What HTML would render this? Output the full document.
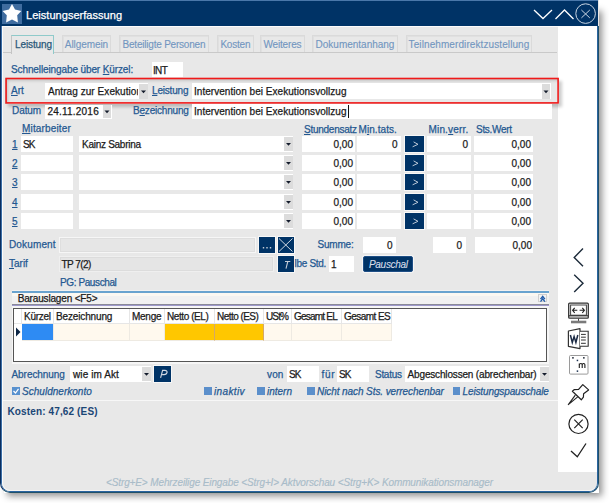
<!DOCTYPE html>
<html><head><meta charset="utf-8"><style>
html,body{margin:0;padding:0;background:#fff;}
body{width:609px;height:503px;position:relative;overflow:hidden;font-family:"Liberation Sans",sans-serif;}
.t{position:absolute;white-space:nowrap;line-height:12px;-webkit-text-stroke:0.25px currentColor;}
u{text-decoration:underline;text-underline-offset:1px;}
svg{overflow:visible}
</style></head><body>
<div style="position:absolute;left:4px;top:8px;width:595px;height:485px;box-shadow:3px 3px 7px rgba(0,0,0,0.44);"></div>
<div style="position:absolute;left:0px;top:0px;width:599px;height:493px;background:#e8e8e8;border-radius:0 0 10px 10px;"></div>
<div style="position:absolute;left:0px;top:0px;width:598px;height:26px;background:#003366;"></div>
<div style="position:absolute;left:0px;top:0px;width:598px;height:1px;background:#4a78aa;"></div>
<div style="position:absolute;left:2px;top:4px;width:20px;height:20px;background:#3f6c9f;"></div>
<svg style="position:absolute;left:2px;top:3px" width="21" height="21" viewBox="2 3 21 21"><polygon fill="#fff" points="12,3.9 15,9.6 21.3,10.9 17.2,15.3 17.9,22.5 12,19.5 6.1,22.5 6.8,15.3 2.6,10.9 9,9.6"/></svg>
<div class="t" style="left:26px;top:9px;font-size:11px;color:#fff;letter-spacing:0.036px;">Leistungserfassung</div>
<svg style="position:absolute;left:530px;top:5px" width="50" height="20" viewBox="530 5 50 20"><polyline points="534,10 543,18.5 552,10" fill="none" stroke="#fff" stroke-width="1.3"/><polyline points="555.5,19 564.5,10 573.5,19" fill="none" stroke="#fff" stroke-width="1.3"/></svg>
<svg style="position:absolute;left:574px;top:2px" width="24" height="24" viewBox="574 2 24 24"><circle cx="585.6" cy="13.6" r="9.8" fill="none" stroke="#c9d5e2" stroke-width="1"/><path d="M581.4,10 L589.8,17.9 M589.8,10 L581.4,17.9" stroke="#c9d5e2" stroke-width="1"/></svg>
<div style="position:absolute;left:2px;top:26px;width:595px;height:1px;background:#fbfbfb;"></div>
<div style="position:absolute;left:558px;top:26px;width:39px;height:446px;background:#fff;"></div>
<div style="position:absolute;left:0;top:26px;width:599px;height:467px;box-sizing:border-box;border-left:1px solid #0a2d5e;border-right:1px solid #1f5068;border-bottom:1px solid #1f5068;border-radius:0 0 10px 10px;"></div>
<div style="position:absolute;left:1px;top:26px;width:597px;height:466px;box-sizing:border-box;border-left:1px solid #3b6ea6;border-right:1px solid #2a64a0;border-bottom:1px solid #2a64a0;border-radius:0 0 9px 9px;"></div>
<div style="position:absolute;left:2px;top:26px;width:595px;height:465px;box-sizing:border-box;border-left:1px solid #fbfbfb;border-bottom:1px solid #f8f6f2;border-radius:0 0 8px 8px;"></div>
<div style="position:absolute;left:3px;top:52px;width:554px;height:1px;background:#c9c9c9;"></div>
<div style="position:absolute;left:11px;top:35px;width:41px;height:18px;background:#e8e8e8;border-left:1px solid #c4c4c4;border-top:1px solid #8fcaca;border-right:1px solid #8fcaca;"></div>
<div class="t" style="left:15px;top:39px;font-size:10px;color:#2a5878;letter-spacing:-0.115px;">Leistung</div>
<div style="position:absolute;left:62px;top:35px;width:47px;height:16px;border:1px solid #dadada;border-bottom:none;box-shadow:inset 1px 1px 0 #e0e0e0;"></div>
<div class="t" style="left:64.8px;top:39px;font-size:10px;color:#7296c0;letter-spacing:-0.076px;-webkit-text-stroke:0.12px currentColor;">Allgemein</div>
<div style="position:absolute;left:119px;top:35px;width:88px;height:16px;border:1px solid #dadada;border-bottom:none;box-shadow:inset 1px 1px 0 #e0e0e0;"></div>
<div class="t" style="left:122.5px;top:39px;font-size:10px;color:#7296c0;letter-spacing:-0.207px;-webkit-text-stroke:0.12px currentColor;">Beteiligte Personen</div>
<div style="position:absolute;left:217px;top:35px;width:35px;height:16px;border:1px solid #dadada;border-bottom:none;box-shadow:inset 1px 1px 0 #e0e0e0;"></div>
<div class="t" style="left:220.4px;top:39px;font-size:10px;color:#7296c0;letter-spacing:-0.206px;-webkit-text-stroke:0.12px currentColor;">Kosten</div>
<div style="position:absolute;left:260px;top:35px;width:43px;height:16px;border:1px solid #dadada;border-bottom:none;box-shadow:inset 1px 1px 0 #e0e0e0;"></div>
<div class="t" style="left:263.4px;top:39px;font-size:10px;color:#7296c0;letter-spacing:-0.153px;-webkit-text-stroke:0.12px currentColor;">Weiteres</div>
<div style="position:absolute;left:312px;top:35px;width:84px;height:16px;border:1px solid #dadada;border-bottom:none;box-shadow:inset 1px 1px 0 #e0e0e0;"></div>
<div class="t" style="left:315.6px;top:39px;font-size:10px;color:#7296c0;letter-spacing:-0.011px;-webkit-text-stroke:0.12px currentColor;">Dokumentanhang</div>
<div style="position:absolute;left:406px;top:35px;width:124px;height:16px;border:1px solid #dadada;border-bottom:none;box-shadow:inset 1px 1px 0 #e0e0e0;"></div>
<div class="t" style="left:408.6px;top:39px;font-size:10px;color:#7296c0;letter-spacing:0.093px;-webkit-text-stroke:0.12px currentColor;">Teilnehmerdirektzustellung</div>
<div class="t" style="left:11px;top:64px;font-size:10px;color:#245891;letter-spacing:-0.111px;">Schnelleingabe über <u>K</u>ürzel:</div>
<div style="position:absolute;left:152px;top:62px;width:31px;height:15px;background:#fff;"></div>
<div class="t" style="left:153px;top:65px;font-size:10px;color:#1a1a1a;letter-spacing:-0.654px;">INT</div>
<div style="position:absolute;left:5px;top:78px;width:554px;height:26px;box-shadow:3px 3px 3px rgba(0,0,0,0.2), inset 3px 3px 3px rgba(0,0,0,0.15);"></div>
<div class="t" style="left:11px;top:85px;font-size:10px;color:#245891;"><u>A</u>rt</div>
<div style="position:absolute;left:45px;top:83px;width:103px;height:16px;background:#fff;"></div>
<div class="t" style="left:48px;top:86px;font-size:10px;color:#1a1a1a;width:90px;overflow:hidden;letter-spacing:0.062px;">Antrag zur Exekution</div>
<div style="position:absolute;left:139px;top:84px;width:9px;height:15px;background:#dcdcdc;"></div>
<svg style="position:absolute;left:139px;top:84px" width="9" height="15" viewBox="139 84 9 15"><polygon points="141.0,90.5 146.0,90.5 143.5,93.3" fill="#141c2c"/></svg>
<div class="t" style="left:152px;top:85px;font-size:10px;color:#245891;letter-spacing:-0.186px;"><u>L</u>eistung</div>
<div style="position:absolute;left:192px;top:83px;width:359px;height:16px;background:#fff;"></div>
<div class="t" style="left:194px;top:86px;font-size:10px;color:#1a1a1a;letter-spacing:0.040px;">Intervention bei Exekutionsvollzug</div>
<div style="position:absolute;left:542px;top:84px;width:8px;height:15px;background:#dcdcdc;"></div>
<svg style="position:absolute;left:542px;top:84px" width="8" height="15" viewBox="542 84 8 15"><polygon points="543.5,90.5 548.5,90.5 546.0,93.3" fill="#141c2c"/></svg>
<svg style="position:absolute;left:4px;top:77px" width="556" height="28" viewBox="4 77 556 28"><rect x="6.1" y="78.5" width="552" height="24.4" fill="none" stroke="#f01a1a" stroke-width="1.6"/></svg>
<div class="t" style="left:12px;top:105px;font-size:10px;color:#245891;letter-spacing:-0.063px;">Datum</div>
<div style="position:absolute;left:45px;top:105px;width:67px;height:14px;background:#fff;"></div>
<div class="t" style="left:47.5px;top:106px;font-size:10px;color:#1a1a1a;letter-spacing:0.211px;">24.11.2016</div>
<div style="position:absolute;left:103px;top:105px;width:8px;height:13px;background:#dcdcdc;"></div>
<svg style="position:absolute;left:103px;top:105px" width="8" height="13" viewBox="103 105 8 13"><polygon points="104.5,110.5 109.5,110.5 107.0,113.3" fill="#141c2c"/></svg>
<div class="t" style="left:133px;top:105px;font-size:10px;color:#245891;letter-spacing:-0.202px;">B<u>e</u>zeichnung</div>
<div style="position:absolute;left:192px;top:104px;width:360px;height:15px;background:#fff;"></div>
<div class="t" style="left:194px;top:106px;font-size:10px;color:#1a1a1a;letter-spacing:0.040px;">Intervention bei Exekutionsvollzug</div>
<div style="position:absolute;left:348px;top:105px;width:1px;height:13px;background:#111;"></div>
<div class="t" style="left:22px;top:123px;font-size:10px;color:#245891;letter-spacing:0.157px;"><u>M</u>itarbeiter</div>
<div class="t" style="left:304px;top:124px;font-size:10px;color:#245891;letter-spacing:-0.259px;"><u>S</u>tundensatz</div>
<div class="t" style="left:358.5px;top:124px;font-size:10px;color:#245891;letter-spacing:0.064px;">M<u>i</u>n.tats.</div>
<div class="t" style="left:428.5px;top:124px;font-size:10px;color:#245891;letter-spacing:0.170px;">Min.<u>v</u>err.</div>
<div class="t" style="left:476px;top:124px;font-size:10px;color:#245891;letter-spacing:-0.293px;">Sts.Wert</div>
<div class="t" style="left:12px;top:139px;font-size:10px;color:#245891;"><u>1</u></div>
<div style="position:absolute;left:21px;top:136px;width:52px;height:16px;background:#fff;"></div>
<div style="position:absolute;left:79px;top:136px;width:214px;height:16px;background:#fff;"></div>
<div style="position:absolute;left:284px;top:137px;width:9px;height:14px;background:#dcdcdc;"></div>
<svg style="position:absolute;left:284px;top:137px" width="9" height="14" viewBox="284 137 9 14"><polygon points="286.0,143.0 291.0,143.0 288.5,145.8" fill="#141c2c"/></svg>
<div style="position:absolute;left:302px;top:136px;width:53px;height:16px;background:#fff;"></div>
<div class="t" style="right:256px;top:139px;font-size:10px;color:#222;">0,00</div>
<div style="position:absolute;left:357px;top:136px;width:44px;height:16px;background:#fff;"></div>
<div style="position:absolute;left:405px;top:136px;width:19px;height:16px;background:#003366;box-shadow:0 0 0 1px #f7f7f7;"></div>
<svg style="position:absolute;left:405px;top:136px" width="19" height="16" viewBox="405 136 19 16"><polyline points="413.6,141.9 418,144.3 412.6,146.8" fill="none" stroke="#b9c6d6" stroke-width="1"/></svg>
<div style="position:absolute;left:427px;top:136px;width:44px;height:16px;background:#fff;"></div>
<div style="position:absolute;left:474px;top:136px;width:59px;height:16px;background:#fff;"></div>
<div class="t" style="right:78px;top:139px;font-size:10px;color:#222;">0,00</div>
<div class="t" style="left:23px;top:139px;font-size:10px;color:#1a1a1a;letter-spacing:-0.941px;">SK</div>
<div class="t" style="left:82px;top:139px;font-size:10px;color:#1a1a1a;letter-spacing:-0.271px;">Kainz Sabrina</div>
<div class="t" style="right:211.5px;top:139px;font-size:10px;color:#222;">0</div>
<div class="t" style="right:141px;top:139px;font-size:10px;color:#222;">0</div>
<div class="t" style="left:12px;top:158px;font-size:10px;color:#245891;"><u>2</u></div>
<div style="position:absolute;left:21px;top:155px;width:52px;height:16px;background:#fff;"></div>
<div style="position:absolute;left:79px;top:155px;width:214px;height:16px;background:#fff;"></div>
<div style="position:absolute;left:284px;top:156px;width:9px;height:14px;background:#dcdcdc;"></div>
<svg style="position:absolute;left:284px;top:156px" width="9" height="14" viewBox="284 156 9 14"><polygon points="286.0,162.0 291.0,162.0 288.5,164.8" fill="#141c2c"/></svg>
<div style="position:absolute;left:302px;top:155px;width:53px;height:16px;background:#fff;"></div>
<div class="t" style="right:256px;top:158px;font-size:10px;color:#222;">0,00</div>
<div style="position:absolute;left:357px;top:155px;width:44px;height:16px;background:#fff;"></div>
<div style="position:absolute;left:405px;top:155px;width:19px;height:16px;background:#003366;box-shadow:0 0 0 1px #f7f7f7;"></div>
<svg style="position:absolute;left:405px;top:155px" width="19" height="16" viewBox="405 155 19 16"><polyline points="413.6,160.9 418,163.3 412.6,165.8" fill="none" stroke="#b9c6d6" stroke-width="1"/></svg>
<div style="position:absolute;left:427px;top:155px;width:44px;height:16px;background:#fff;"></div>
<div style="position:absolute;left:474px;top:155px;width:59px;height:16px;background:#fff;"></div>
<div class="t" style="right:78px;top:158px;font-size:10px;color:#222;">0,00</div>
<div class="t" style="left:12px;top:177px;font-size:10px;color:#245891;"><u>3</u></div>
<div style="position:absolute;left:21px;top:174px;width:52px;height:16px;background:#fff;"></div>
<div style="position:absolute;left:79px;top:174px;width:214px;height:16px;background:#fff;"></div>
<div style="position:absolute;left:284px;top:175px;width:9px;height:14px;background:#dcdcdc;"></div>
<svg style="position:absolute;left:284px;top:175px" width="9" height="14" viewBox="284 175 9 14"><polygon points="286.0,181.0 291.0,181.0 288.5,183.8" fill="#141c2c"/></svg>
<div style="position:absolute;left:302px;top:174px;width:53px;height:16px;background:#fff;"></div>
<div class="t" style="right:256px;top:177px;font-size:10px;color:#222;">0,00</div>
<div style="position:absolute;left:357px;top:174px;width:44px;height:16px;background:#fff;"></div>
<div style="position:absolute;left:405px;top:174px;width:19px;height:16px;background:#003366;box-shadow:0 0 0 1px #f7f7f7;"></div>
<svg style="position:absolute;left:405px;top:174px" width="19" height="16" viewBox="405 174 19 16"><polyline points="413.6,179.9 418,182.3 412.6,184.8" fill="none" stroke="#b9c6d6" stroke-width="1"/></svg>
<div style="position:absolute;left:427px;top:174px;width:44px;height:16px;background:#fff;"></div>
<div style="position:absolute;left:474px;top:174px;width:59px;height:16px;background:#fff;"></div>
<div class="t" style="right:78px;top:177px;font-size:10px;color:#222;">0,00</div>
<div class="t" style="left:12px;top:197px;font-size:10px;color:#245891;"><u>4</u></div>
<div style="position:absolute;left:21px;top:194px;width:52px;height:16px;background:#fff;"></div>
<div style="position:absolute;left:79px;top:194px;width:214px;height:16px;background:#fff;"></div>
<div style="position:absolute;left:284px;top:195px;width:9px;height:14px;background:#dcdcdc;"></div>
<svg style="position:absolute;left:284px;top:195px" width="9" height="14" viewBox="284 195 9 14"><polygon points="286.0,201.0 291.0,201.0 288.5,203.8" fill="#141c2c"/></svg>
<div style="position:absolute;left:302px;top:194px;width:53px;height:16px;background:#fff;"></div>
<div class="t" style="right:256px;top:197px;font-size:10px;color:#222;">0,00</div>
<div style="position:absolute;left:357px;top:194px;width:44px;height:16px;background:#fff;"></div>
<div style="position:absolute;left:405px;top:194px;width:19px;height:16px;background:#003366;box-shadow:0 0 0 1px #f7f7f7;"></div>
<svg style="position:absolute;left:405px;top:194px" width="19" height="16" viewBox="405 194 19 16"><polyline points="413.6,199.9 418,202.3 412.6,204.8" fill="none" stroke="#b9c6d6" stroke-width="1"/></svg>
<div style="position:absolute;left:427px;top:194px;width:44px;height:16px;background:#fff;"></div>
<div style="position:absolute;left:474px;top:194px;width:59px;height:16px;background:#fff;"></div>
<div class="t" style="right:78px;top:197px;font-size:10px;color:#222;">0,00</div>
<div class="t" style="left:12px;top:216px;font-size:10px;color:#245891;"><u>5</u></div>
<div style="position:absolute;left:21px;top:213px;width:52px;height:16px;background:#fff;"></div>
<div style="position:absolute;left:79px;top:213px;width:214px;height:16px;background:#fff;"></div>
<div style="position:absolute;left:284px;top:214px;width:9px;height:14px;background:#dcdcdc;"></div>
<svg style="position:absolute;left:284px;top:214px" width="9" height="14" viewBox="284 214 9 14"><polygon points="286.0,220.0 291.0,220.0 288.5,222.8" fill="#141c2c"/></svg>
<div style="position:absolute;left:302px;top:213px;width:53px;height:16px;background:#fff;"></div>
<div class="t" style="right:256px;top:216px;font-size:10px;color:#222;">0,00</div>
<div style="position:absolute;left:357px;top:213px;width:44px;height:16px;background:#fff;"></div>
<div style="position:absolute;left:405px;top:213px;width:19px;height:16px;background:#003366;box-shadow:0 0 0 1px #f7f7f7;"></div>
<svg style="position:absolute;left:405px;top:213px" width="19" height="16" viewBox="405 213 19 16"><polyline points="413.6,218.9 418,221.3 412.6,223.8" fill="none" stroke="#b9c6d6" stroke-width="1"/></svg>
<div style="position:absolute;left:427px;top:213px;width:44px;height:16px;background:#fff;"></div>
<div style="position:absolute;left:474px;top:213px;width:59px;height:16px;background:#fff;"></div>
<div class="t" style="right:78px;top:216px;font-size:10px;color:#222;">0,00</div>
<div class="t" style="left:9px;top:239px;font-size:10px;color:#245891;letter-spacing:0.147px;">Dokument</div>
<div style="position:absolute;left:59px;top:237px;width:197px;height:16px;background:#e6e6e6;border:1px solid #f6f6f6;box-shadow:inset 0 0 0 1px #dedede;box-sizing:border-box;"></div>
<div style="position:absolute;left:259px;top:237px;width:16px;height:16px;background:#003366;box-shadow:0 0 0 1px #f7f7f7;"></div>
<svg style="position:absolute;left:259px;top:237px" width="16" height="16" viewBox="259 237 16 16"><rect x="262.8" y="247" width="1.4" height="1.5" fill="#c4ccd6"/><rect x="266.3" y="247" width="1.4" height="1.5" fill="#c4ccd6"/><rect x="269.8" y="247" width="1.4" height="1.5" fill="#c4ccd6"/></svg>
<div style="position:absolute;left:278px;top:237px;width:16px;height:16px;background:#003366;box-shadow:0 0 0 1px #f7f7f7;"></div>
<svg style="position:absolute;left:277px;top:237px" width="17" height="16" viewBox="277 237 17 16"><path d="M279,238.5 L292.5,251.5 M292.5,238.5 L279,251.5" stroke="#cfd8e3" stroke-width="1"/></svg>
<div class="t" style="left:317.5px;top:239px;font-size:10px;color:#245891;letter-spacing:-0.206px;">Summe:</div>
<div style="position:absolute;left:363px;top:237px;width:33px;height:16px;background:#fff;"></div>
<div class="t" style="right:216.5px;top:240px;font-size:10px;color:#222;">0</div>
<div style="position:absolute;left:433px;top:237px;width:33px;height:16px;background:#fff;"></div>
<div class="t" style="right:147px;top:240px;font-size:10px;color:#222;">0</div>
<div style="position:absolute;left:475px;top:237px;width:58px;height:16px;background:#fff;"></div>
<div class="t" style="right:77px;top:240px;font-size:10px;color:#222;">0,00</div>
<div class="t" style="left:9px;top:258px;font-size:10px;color:#245891;"><u>T</u>arif</div>
<div style="position:absolute;left:59px;top:256px;width:215px;height:16px;background:#e5e5e5;border:1px solid #efefef;box-shadow:inset 0 0 0 1px #dcdcdc;box-sizing:border-box;"></div>
<div class="t" style="left:61.4px;top:259px;font-size:10px;color:#1a1a1a;letter-spacing:-0.526px;">TP 7(2)</div>
<div style="position:absolute;left:278px;top:256px;width:16px;height:16px;background:#003366;box-shadow:0 0 0 1px #f7f7f7;"></div>
<svg style="position:absolute;left:277px;top:256px" width="17" height="16" viewBox="277 256 17 16"><path d="M285,261.5 L290.3,261.5 M287.8,261.5 L286,268.6" fill="none" stroke="#c4ccd8" stroke-width="1.1"/></svg>
<div class="t" style="left:294.5px;top:258px;font-size:10px;color:#245891;letter-spacing:-0.287px;">lbe Std.</div>
<div style="position:absolute;left:329px;top:256px;width:25px;height:16px;background:#fff;"></div>
<div class="t" style="left:331px;top:259px;font-size:10px;color:#1a1a1a;">1</div>
<div style="position:absolute;left:363px;top:256px;width:50px;height:16px;background:#003366;border:1px solid #1f4f86;border-radius:2px;box-shadow:0 0 0 1px #f6f6f6;box-sizing:border-box;"></div>
<div class="t" style="left:369px;top:259px;font-size:10px;color:#d6dde8;font-style:italic;letter-spacing:-0.305px;-webkit-text-stroke:0.1px currentColor;">Pauschal</div>
<div class="t" style="left:60px;top:277px;font-size:10px;color:#245891;letter-spacing:-0.395px;">PG: Pauschal</div>
<div style="position:absolute;left:12px;top:290px;width:537px;height:15px;background:#f1f1f1;"></div>
<div style="position:absolute;left:12px;top:293px;width:537px;height:3px;background:#fbf8f2;"></div>
<div style="position:absolute;left:12px;top:291px;width:537px;height:2px;background:#69a3cf;"></div>
<div style="position:absolute;left:12px;top:304px;width:537px;height:1px;background:#8a8a98;"></div>
<div style="position:absolute;left:12px;top:305px;width:537px;height:1px;background:#9d98cc;"></div>
<div class="t" style="left:17.7px;top:293px;font-size:10px;color:#1a1a1a;letter-spacing:-0.165px;">Barauslagen &lt;F5&gt;</div>
<div style="position:absolute;left:538px;top:294px;width:9px;height:8px;background:#f3f3f3;border:1px solid #cfcfcf;box-sizing:border-box;"></div>
<svg style="position:absolute;left:539px;top:295px" width="8" height="8" viewBox="539 295 8 8"><path d="M540.5,299.2 L542.7,296.4 L544.9,299.2 M540.5,301.6 L542.7,298.8 L544.9,301.6" fill="none" stroke="#1f5aa8" stroke-width="1.3"/></svg>
<div style="position:absolute;left:12px;top:306px;width:537px;height:58px;background:#f6f6f6;"></div>
<div style="position:absolute;left:13px;top:308px;width:534px;height:54px;border:1.5px solid #555;box-sizing:border-box;background:#fff"></div>
<div style="position:absolute;left:14px;top:309px;width:7px;height:14px;border-right:1px solid #e6e6e6;border-bottom:1px solid #e6e6e6;background:#fff"></div>
<div style="position:absolute;left:22px;top:309px;width:31px;height:14px;border-right:1px solid #e6e6e6;border-bottom:1px solid #e6e6e6;background:#fff"></div>
<div class="t" style="left:24px;top:311px;font-size:10px;color:#1a1a1a;letter-spacing:-0.269px;">Kürzel</div>
<div style="position:absolute;left:22px;top:324px;width:31px;height:16px;border-right:1px solid #eeeae2;border-bottom:1px solid #eeeae2;background:#2e8bf3"></div>
<div style="position:absolute;left:54px;top:309px;width:75px;height:14px;border-right:1px solid #e6e6e6;border-bottom:1px solid #e6e6e6;background:#fff"></div>
<div class="t" style="left:56px;top:311px;font-size:10px;color:#1a1a1a;letter-spacing:-0.142px;">Bezeichnung</div>
<div style="position:absolute;left:54px;top:324px;width:75px;height:16px;border-right:1px solid #eeeae2;border-bottom:1px solid #eeeae2;background:#fff9ee"></div>
<div style="position:absolute;left:130px;top:309px;width:34px;height:14px;border-right:1px solid #e6e6e6;border-bottom:1px solid #e6e6e6;background:#fff"></div>
<div class="t" style="left:132px;top:311px;font-size:10px;color:#1a1a1a;letter-spacing:-0.268px;">Menge</div>
<div style="position:absolute;left:130px;top:324px;width:34px;height:16px;border-right:1px solid #eeeae2;border-bottom:1px solid #eeeae2;background:#fff9ee"></div>
<div style="position:absolute;left:165px;top:309px;width:49px;height:14px;border-right:1px solid #e6e6e6;border-bottom:1px solid #e6e6e6;background:#fff"></div>
<div class="t" style="left:167px;top:311px;font-size:10px;color:#1a1a1a;letter-spacing:-0.419px;">Netto (EL)</div>
<div style="position:absolute;left:165px;top:324px;width:49px;height:16px;border-right:1px solid #d4a868;border-bottom:1px solid #eeeae2;background:#ffc700"></div>
<div style="position:absolute;left:215px;top:309px;width:48px;height:14px;border-right:1px solid #e6e6e6;border-bottom:1px solid #e6e6e6;background:#fff"></div>
<div class="t" style="left:217px;top:311px;font-size:10px;color:#1a1a1a;letter-spacing:-0.542px;">Netto (ES)</div>
<div style="position:absolute;left:215px;top:324px;width:48px;height:16px;border-right:1px solid #d4a868;border-bottom:1px solid #eeeae2;background:#ffc700"></div>
<div style="position:absolute;left:264px;top:309px;width:27px;height:14px;border-right:1px solid #e6e6e6;border-bottom:1px solid #e6e6e6;background:#fff"></div>
<div class="t" style="left:266px;top:311px;font-size:10px;color:#1a1a1a;letter-spacing:-0.854px;">USt%</div>
<div style="position:absolute;left:264px;top:324px;width:27px;height:16px;border-right:1px solid #eeeae2;border-bottom:1px solid #eeeae2;background:#fff9ee"></div>
<div style="position:absolute;left:292px;top:309px;width:49px;height:14px;border-right:1px solid #e6e6e6;border-bottom:1px solid #e6e6e6;background:#fff"></div>
<div class="t" style="left:294px;top:311px;font-size:10px;color:#1a1a1a;letter-spacing:-0.790px;">Gesamt EL</div>
<div style="position:absolute;left:292px;top:324px;width:49px;height:16px;border-right:1px solid #eeeae2;border-bottom:1px solid #eeeae2;background:#fff9ee"></div>
<div style="position:absolute;left:342px;top:309px;width:49px;height:14px;border-right:1px solid #e6e6e6;border-bottom:1px solid #e6e6e6;background:#fff"></div>
<div class="t" style="left:344px;top:311px;font-size:10px;color:#1a1a1a;letter-spacing:-0.553px;">Gesamt ES</div>
<div style="position:absolute;left:342px;top:324px;width:49px;height:16px;border-right:1px solid #eeeae2;border-bottom:1px solid #eeeae2;background:#fff9ee"></div>
<svg style="position:absolute;left:14px;top:324px" width="8" height="16" viewBox="14 324 8 16"><polygon points="16,327.5 20.5,332 16,336.5" fill="#0b2545"/></svg>
<div class="t" style="left:11.5px;top:369px;font-size:10px;color:#245891;letter-spacing:-0.059px;">Abrechnung</div>
<div style="position:absolute;left:70px;top:366px;width:81px;height:16px;background:#fff;"></div>
<div class="t" style="left:73px;top:369px;font-size:10px;color:#1a1a1a;letter-spacing:0.099px;">wie im Akt</div>
<div style="position:absolute;left:142px;top:367px;width:9px;height:14px;background:#dcdcdc;"></div>
<svg style="position:absolute;left:142px;top:367px" width="9" height="14" viewBox="142 367 9 14"><polygon points="144.0,373.0 149.0,373.0 146.5,375.8" fill="#141c2c"/></svg>
<div style="position:absolute;left:154px;top:366px;width:17px;height:16px;background:#003366;box-shadow:0 0 0 1px #f7f7f7;"></div>
<svg style="position:absolute;left:155px;top:366px" width="16" height="16" viewBox="155 366 16 16"><path d="M160.6,377.8 L162.6,370.4 L164.8,370.4 Q167.6,370.6 167,372.8 Q166.3,374.8 163.6,374.6 L162.1,374.6" fill="none" stroke="#d4dae4" stroke-width="1.1"/></svg>
<div class="t" style="left:267px;top:369px;font-size:10px;color:#245891;letter-spacing:0.139px;">von</div>
<div style="position:absolute;left:287px;top:366px;width:32px;height:16px;background:#fff;"></div>
<div class="t" style="left:289px;top:369px;font-size:10px;color:#1a1a1a;letter-spacing:-0.941px;">SK</div>
<div class="t" style="left:321.5px;top:369px;font-size:10px;color:#245891;letter-spacing:0.666px;">für</div>
<div style="position:absolute;left:337px;top:366px;width:32px;height:16px;background:#fff;"></div>
<div class="t" style="left:339px;top:369px;font-size:10px;color:#1a1a1a;letter-spacing:-0.941px;">SK</div>
<div class="t" style="left:375px;top:369px;font-size:10px;color:#245891;letter-spacing:-0.290px;">Status</div>
<div style="position:absolute;left:405px;top:366px;width:144px;height:16px;background:#fff;"></div>
<div class="t" style="left:407.6px;top:369px;font-size:10px;color:#1a1a1a;letter-spacing:-0.166px;">Abgeschlossen (abrechenbar)</div>
<div style="position:absolute;left:540px;top:367px;width:9px;height:14px;background:#dcdcdc;"></div>
<svg style="position:absolute;left:540px;top:367px" width="9" height="14" viewBox="540 367 9 14"><polygon points="542.0,373.0 547.0,373.0 544.5,375.8" fill="#141c2c"/></svg>
<div style="position:absolute;left:12px;top:387px;width:8px;height:8px;background:#5891cf;"></div>
<svg style="position:absolute;left:12px;top:387px" width="8" height="8" viewBox="12 387 8 8"><polyline points="13.5,391 15.5,393 18.5,388.8" fill="none" stroke="#fff" stroke-width="1.2"/></svg>
<div class="t" style="left:22px;top:386px;font-size:10px;color:#245891;font-style:italic;letter-spacing:0.024px;">Schuldnerkonto</div>
<div style="position:absolute;left:204px;top:387px;width:7.5px;height:8px;background:#5b8fcb;"></div>
<div class="t" style="left:214px;top:386px;font-size:10px;color:#245891;font-style:italic;letter-spacing:0.359px;">inaktiv</div>
<div style="position:absolute;left:257px;top:387px;width:7.5px;height:8px;background:#5b8fcb;"></div>
<div class="t" style="left:267px;top:386px;font-size:10px;color:#245891;font-style:italic;">intern</div>
<div style="position:absolute;left:307px;top:387px;width:7.5px;height:8px;background:#5b8fcb;"></div>
<div class="t" style="left:317px;top:386px;font-size:10px;color:#245891;font-style:italic;letter-spacing:-0.083px;">Nicht nach Sts. verrechenbar</div>
<div style="position:absolute;left:452.5px;top:387px;width:7.5px;height:8px;background:#5b8fcb;"></div>
<div class="t" style="left:462.5px;top:386px;font-size:10px;color:#245891;font-style:italic;letter-spacing:-0.123px;">Leistungspauschale</div>
<div style="position:absolute;left:3px;top:400px;width:555px;height:1px;background:#f7f7f7;"></div>
<div class="t" style="left:7.5px;top:406px;font-size:10px;color:#1b4676;font-weight:bold;letter-spacing:0.130px;-webkit-text-stroke:0;">Kosten: 47,62 (ES)</div>
<div class="t" style="left:106px;top:477px;font-size:10px;color:#a9bcc9;font-style:italic;letter-spacing:-0.117px;-webkit-text-stroke:0.15px currentColor;">&lt;Strg+E&gt; Mehrzeilige Eingabe &lt;Strg+I&gt; Aktvorschau &lt;Strg+K&gt; Kommunikationsmanager</div>
<svg style="position:absolute;left:566px;top:244px" width="24" height="52" viewBox="566 244 24 52"><polyline points="583,248.6 574.2,257.5 583,266.3" fill="none" stroke="#1c2b3a" stroke-width="1.4"/><polyline points="574.2,274.8 583,283.2 574.2,291.9" fill="none" stroke="#1c2b3a" stroke-width="1.4"/></svg>
<svg style="position:absolute;left:566px;top:300px" width="26" height="26" viewBox="566 300 26 26"><rect x="568.7" y="303.1" width="19.6" height="15.1" rx="1" fill="#fff" stroke="#333" stroke-width="1.3"/><rect x="570.6" y="305" width="15.8" height="10.2" fill="none" stroke="#444" stroke-width="1"/><line x1="569" y1="315.8" x2="588" y2="315.8" stroke="#333" stroke-width="1.2"/><path d="M573,310.3 L577.3,310.3 M579.6,310.3 L584,310.3 M574.7,307.8 L572.6,310.3 L574.7,312.8 M582.3,307.8 L584.4,310.3 L582.3,312.8" fill="none" stroke="#222" stroke-width="1.1"/><line x1="578.5" y1="318.5" x2="578.5" y2="321" stroke="#444" stroke-width="1"/><rect x="571" y="320.7" width="15.3" height="2.6" fill="#7a7a7a"/></svg>
<svg style="position:absolute;left:566px;top:326px" width="26" height="26" viewBox="566 326 26 26"><path d="M568.4,331 L580,328.7 L580,348.6 L568.4,346.3 Z" fill="#fff" stroke="#333" stroke-width="1.2" stroke-linejoin="round"/><path d="M580,331.3 L588.2,331.3 L588.2,346.3 L580,346.3" fill="#fff" stroke="#333" stroke-width="1.1"/><path d="M581,334.4 L585.8,334.4 M581,337.2 L585.8,337.2 M581,340 L585.8,340 M581,343.3 L585.8,343.3" stroke="#333" stroke-width="1"/><path d="M570.4,335 L572.3,342.4 L574.1,336.6 L575.9,342.4 L577.8,335" fill="none" stroke="#1b2a44" stroke-width="1.5"/></svg>
<svg style="position:absolute;left:566px;top:352px" width="26" height="26" viewBox="566 352 26 26"><rect x="569.5" y="355.5" width="18.5" height="18.6" rx="1" fill="#fff" stroke="#9a9a9a" stroke-width="1"/><rect x="572.2" y="357.1" width="1.5" height="1.5" fill="#111a2a"/><rect x="583.1" y="357.1" width="1.5" height="1.5" fill="#111a2a"/><rect x="576.7" y="359.7" width="1.5" height="1.5" fill="#1a3050"/><rect x="576.7" y="370.4" width="1.5" height="1.5" fill="#1a3050"/><path d="M579.3,368 L579.3,363.6 M579.3,364.6 Q579.6,363.5 580.9,363.5 Q582.2,363.5 582.2,364.8 L582.2,368 M582.2,364.8 Q582.3,363.5 583.6,363.5 Q584.9,363.5 584.9,364.8 L584.9,368" fill="none" stroke="#1a1a1a" stroke-width="1.1"/></svg>
<svg style="position:absolute;left:564px;top:382px" width="28" height="26" viewBox="564 382 28 26"><path d="M582.8,384.6 L588.6,389.9 L583.6,393.7 L583.4,397.2 L581.3,399.8 L572.4,391.2 L574.1,389.7 L578.6,389.4 Z" fill="#fff" stroke="#222" stroke-width="1.2" stroke-linejoin="round"/><path d="M575.3,395.1 L568.3,404.6 L577.7,396.9" fill="none" stroke="#222" stroke-width="1.1" stroke-linejoin="round"/></svg>
<svg style="position:absolute;left:566px;top:411px" width="26" height="26" viewBox="566 411 26 26"><circle cx="578.5" cy="423.9" r="9.6" fill="none" stroke="#222" stroke-width="1.2"/><path d="M574.3,419.7 L582.7,428.1 M582.7,419.7 L574.3,428.1" stroke="#222" stroke-width="1.2"/></svg>
<svg style="position:absolute;left:566px;top:440px" width="26" height="20" viewBox="566 440 26 20"><polyline points="571,451 577.3,456.8 586,443.5" fill="none" stroke="#222" stroke-width="1.3"/></svg>
</body></html>
